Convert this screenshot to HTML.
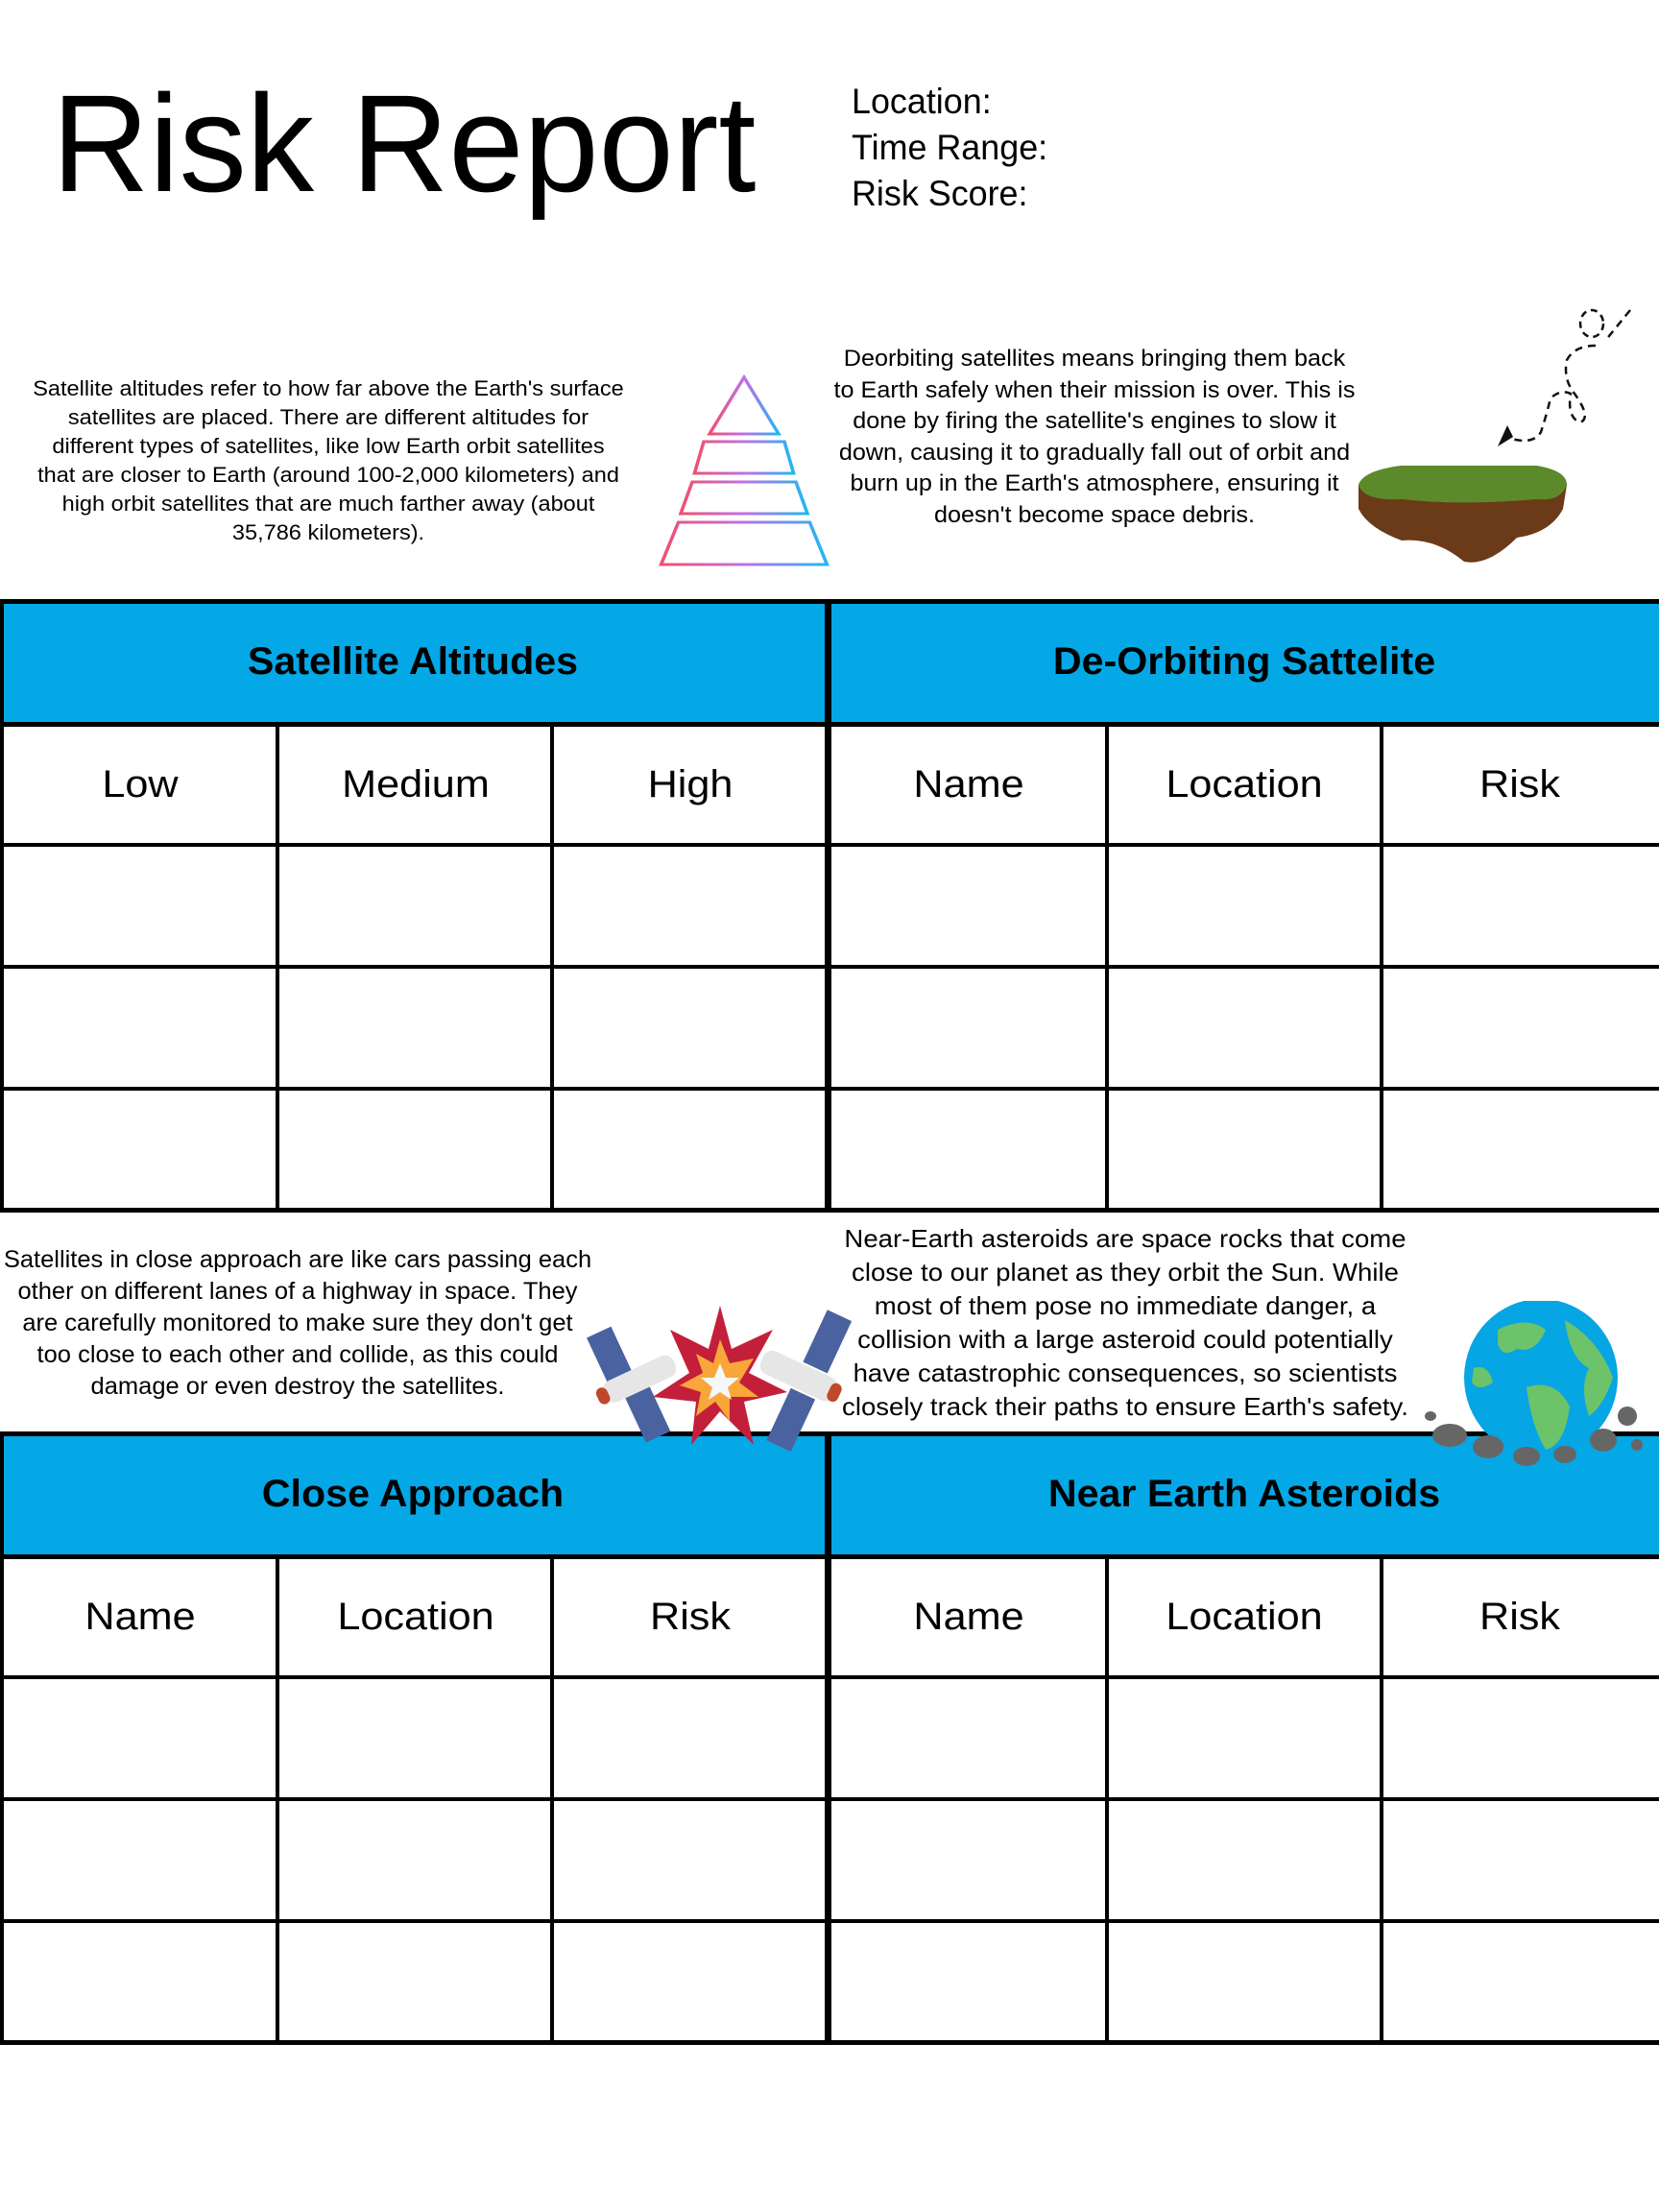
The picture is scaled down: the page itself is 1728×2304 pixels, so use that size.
<!DOCTYPE html>
<html><head><meta charset="utf-8"><style>
*{margin:0;padding:0;box-sizing:border-box}
body{width:1728px;height:2304px;background:#fff;position:relative;overflow:hidden;font-family:"Liberation Sans",sans-serif;color:#000}
.a{position:absolute}
.p{position:absolute;text-align:center;white-space:nowrap;transform-origin:center top}
.vl{position:absolute;width:4px;background:#000}
.hl{position:absolute;height:4px;background:#000;left:0;width:1728px}
.blue{background:#05a8e6}
.hd{position:absolute;font-weight:bold;font-size:40px;transform:scaleX(1.03);text-align:center;width:860px}
.ch{position:absolute;font-size:40px;text-align:center;width:286px;transform:scaleX(1.08)}
</style></head><body>

<div class="a" style="left:54px;top:60px;font-size:144px;line-height:180px;transform:scaleX(.975);transform-origin:left top">Risk Report</div>
<div class="a" style="left:887px;top:82px;font-size:37px;line-height:48px;transform:scaleX(.97);transform-origin:left top">Location:<br>Time Range:<br>Risk Score:</div>

<div class="p" style="left:22px;width:640px;top:390px;font-size:22px;line-height:30px;transform:scaleX(1.07)">Satellite altitudes refer to how far above the Earth's surface<br>satellites are placed. There are different altitudes for<br>different types of satellites, like low Earth orbit satellites<br>that are closer to Earth (around 100-2,000 kilometers) and<br>high orbit satellites that are much farther away (about<br>35,786 kilometers).</div>

<svg class="a" style="left:680px;top:385px" width="190" height="210" viewBox="0 0 190 210">
<defs><linearGradient id="g" x1="0" x2="1"><stop offset="0" stop-color="#f0506e"/><stop offset=".5" stop-color="#c070e8"/><stop offset="1" stop-color="#20b8f0"/></linearGradient></defs>
<g fill="none" stroke="url(#g)" stroke-width="3" transform="translate(95,0) scale(1.2,1) translate(-95,0)">
<polygon points="95,8 125,67 65,67"/><polygon points="60,75 130,75 138,108 52,108"/><polygon points="50,117 140,117 150,150 40,150"/><polygon points="38,159 152,159 167,203 23,203"/></g></svg>

<div class="p" style="left:850px;width:580px;top:358px;font-size:24px;line-height:32.5px;transform:scaleX(1.05)">Deorbiting satellites means bringing them back<br>to Earth safely when their mission is over. This is<br>done by firing the satellite's engines to slow it<br>down, causing it to gradually fall out of orbit and<br>burn up in the Earth's atmosphere, ensuring it<br>doesn't become space debris.</div>

<svg class="a" style="left:1400px;top:315px" width="310" height="280" viewBox="0 0 310 280">
<path d="M298 8 Q280 30 272 40 M262 45 Q240 45 232 60 Q228 80 240 95 Q258 120 246 125 Q232 120 236 95 Q225 90 215 100 Q210 120 205 135 Q196 150 168 140" fill="none" stroke="#111" stroke-width="2.5" stroke-dasharray="8 6"/>
<ellipse cx="258" cy="22" rx="12" ry="14" fill="none" stroke="#111" stroke-width="2.5" stroke-dasharray="7 5"/>
<polygon points="160,150 176,140 170,128" fill="#111"/>
<path d="M15 190 Q20 175 60 170 L200 170 Q230 175 232 190 L228 215 Q215 240 180 245 Q150 275 125 270 Q95 245 60 248 Q25 235 15 215 Z" fill="#6b3a18"/>
<path d="M15 190 Q20 175 60 170 L200 170 Q232 175 232 190 Q225 208 200 205 Q120 212 60 205 Q20 207 15 190Z" fill="#5c8a2a"/>
</svg>

<!-- table 1 -->
<div class="a blue" style="left:0;top:626px;width:1728px;height:128px"></div>
<div class="hl" style="top:624px;height:5px"></div>
<div class="hl" style="top:752px;height:5px"></div>
<div class="hl" style="top:878px"></div><div class="hl" style="top:1005px"></div><div class="hl" style="top:1132px"></div><div class="hl" style="top:1258px;height:5px"></div>
<div class="vl" style="left:0;top:624px;height:639px"></div>
<div class="vl" style="left:859px;top:624px;height:639px;width:7px"></div>
<div class="vl" style="left:287px;top:754px;height:509px"></div><div class="vl" style="left:573px;top:754px;height:509px"></div>
<div class="vl" style="left:1151px;top:754px;height:509px"></div><div class="vl" style="left:1437px;top:754px;height:509px"></div>
<div class="hd" style="left:0;top:667px">Satellite Altitudes</div>
<div class="hd" style="left:866px;top:667px">De-Orbiting Sattelite</div>
<div class="ch" style="left:3px;top:795px">Low</div><div class="ch" style="left:290px;top:795px">Medium</div><div class="ch" style="left:576px;top:795px">High</div>
<div class="ch" style="left:866px;top:795px">Name</div><div class="ch" style="left:1153px;top:795px">Location</div><div class="ch" style="left:1440px;top:795px">Risk</div>

<div class="p" style="left:0;width:620px;top:1296px;font-size:25px;line-height:33px;transform:scaleX(1.02)">Satellites in close approach are like cars passing each<br>other on different lanes of a highway in space. They<br>are carefully monitored to make sure they don't get<br>too close to each other and collide, as this could<br>damage or even destroy the satellites.</div>
<div class="p" style="left:862px;width:620px;top:1273px;font-size:26px;line-height:35px;transform:scaleX(1.06)">Near-Earth asteroids are space rocks that come<br>close to our planet as they orbit the Sun. While<br>most of them pose no immediate danger, a<br>collision with a large asteroid could potentially<br>have catastrophic consequences, so scientists<br>closely track their paths to ensure Earth's safety.</div>

<!-- table 2 -->
<div class="a blue" style="left:0;top:1493px;width:1728px;height:128px"></div>
<div class="hl" style="top:1491px;height:5px"></div>
<div class="hl" style="top:1619px;height:5px"></div>
<div class="hl" style="top:1745px"></div><div class="hl" style="top:1872px"></div><div class="hl" style="top:1999px"></div><div class="hl" style="top:2125px;height:5px"></div>
<div class="vl" style="left:0;top:1491px;height:639px"></div>
<div class="vl" style="left:859px;top:1491px;height:639px;width:7px"></div>
<div class="vl" style="left:287px;top:1621px;height:509px"></div><div class="vl" style="left:573px;top:1621px;height:509px"></div>
<div class="vl" style="left:1151px;top:1621px;height:509px"></div><div class="vl" style="left:1437px;top:1621px;height:509px"></div>
<div class="hd" style="left:0;top:1534px">Close Approach</div>
<div class="hd" style="left:866px;top:1534px">Near Earth Asteroids</div>
<div class="ch" style="left:3px;top:1662px">Name</div><div class="ch" style="left:290px;top:1662px">Location</div><div class="ch" style="left:576px;top:1662px">Risk</div>
<div class="ch" style="left:866px;top:1662px">Name</div><div class="ch" style="left:1153px;top:1662px">Location</div><div class="ch" style="left:1440px;top:1662px">Risk</div>

<!-- collision -->
<svg class="a" style="left:610px;top:1355px" width="280" height="175" viewBox="0 0 280 175">
<g transform="rotate(-25 40 70)"><rect x="18" y="25" width="28" height="55" fill="#4a63a0"/><rect x="28" y="90" width="28" height="60" fill="#4a63a0"/><rect x="10" y="75" width="80" height="24" rx="10" fill="#e6e6e6"/><rect x="2" y="78" width="12" height="18" rx="6" fill="#c0482a"/></g>
<g transform="rotate(25 240 70)"><rect x="225" y="10" width="28" height="60" fill="#4a63a0"/><rect x="225" y="100" width="28" height="60" fill="#4a63a0"/><rect x="185" y="72" width="85" height="26" rx="10" fill="#e6e6e6"/><rect x="262" y="75" width="12" height="20" rx="6" fill="#c0482a"/></g>
<polygon points="140,5 152,50 195,30 170,75 210,95 165,105 175,150 140,115 110,150 115,105 70,100 108,75 88,30 128,50" fill="#c41f3a"/>
<polygon points="140,40 150,65 175,60 160,85 180,100 150,100 150,125 135,105 115,120 120,95 98,88 122,75 115,55 133,65" fill="#f9a63a"/>
<polygon points="140,65 146,80 160,80 148,90 152,103 140,95 128,103 132,90 120,80 134,80" fill="#f5f8fa"/>
</svg>

<!-- earth -->
<svg class="a" style="left:1470px;top:1355px" width="250" height="180" viewBox="0 0 250 180">
<ellipse cx="135" cy="80" rx="80" ry="82" fill="#06a5e3"/>
<path d="M90 30 Q120 15 140 30 Q130 55 110 50 Q95 60 90 45Z M160 20 Q195 40 210 80 Q200 110 185 120 Q175 90 185 70 Q165 60 160 20Z M120 90 Q150 80 165 110 Q160 150 140 155 Q125 130 120 90Z M65 70 Q80 65 85 85 Q70 95 63 85Z" fill="#6cc36a"/>
<g fill="#666"><ellipse cx="40" cy="140" rx="18" ry="12"/><ellipse cx="80" cy="152" rx="16" ry="12"/><ellipse cx="120" cy="162" rx="14" ry="10"/><ellipse cx="200" cy="145" rx="14" ry="12"/><ellipse cx="225" cy="120" rx="10" ry="10"/><ellipse cx="160" cy="160" rx="12" ry="9"/><ellipse cx="20" cy="120" rx="6" ry="5"/><ellipse cx="235" cy="150" rx="6" ry="6"/></g>
</svg>
</body></html>
